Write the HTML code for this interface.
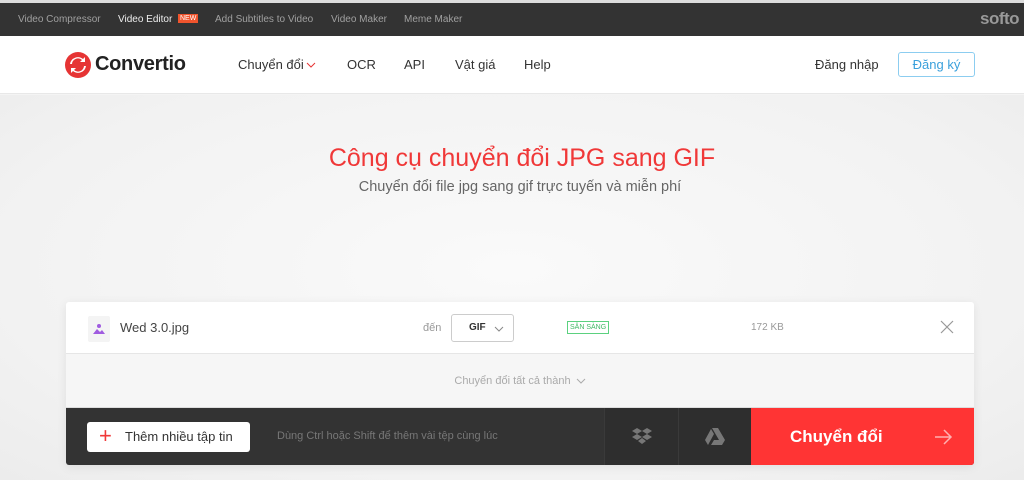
<!DOCTYPE html>
<html><head><meta charset="utf-8"><style>
*{margin:0;padding:0;box-sizing:border-box}
body{width:1024px;height:480px;overflow:hidden;font-family:"Liberation Sans","Noto Sans CJK SC",sans-serif;background:#f4f4f4;position:relative}
.top{position:absolute;left:0;top:0;width:1024px;height:36px;background:#333;border-top:3px solid #ddd;font-size:10px;color:#a0a0a0}
.top span{position:absolute;top:11px}
.hdr{position:absolute;top:36px;left:0;width:1024px;height:58px;background:#fff;border-bottom:1px solid #e8e8e8;font-size:13px;color:#333}
.hdr span{position:absolute;top:21px}
.main{position:absolute;top:95px;left:0;width:1024px;height:385px;background:radial-gradient(ellipse at 50% 45%,#fafafa 0%,#f2f2f2 70%,#ececec 100%)}
.abs{position:absolute}
</style></head><body>
<div class="top">
<span style="left:18px">Video Compressor</span>
<span style="left:118px;color:#eee">Video Editor</span>
<span style="left:178px;top:11px;background:#f0542d;color:#fff;font-size:7px;padding:1px 2px">NEW</span>
<span style="left:215px">Add Subtitles to Video</span>
<span style="left:331px">Video Maker</span>
<span style="left:404px">Meme Maker</span>
<span style="left:980px;top:6px;font-size:17px;font-weight:bold;color:#999;letter-spacing:-0.5px">softo</span>
</div>
<div class="hdr">
<svg class="abs" style="left:65px;top:16px" width="26" height="26" viewBox="0 0 26 26"><circle cx="13" cy="13" r="13" fill="#e63434"/><path d="M7 12a6 6 0 0 1 10-4l-2 2h5V5l-2 2A8 8 0 0 0 5 12z M19 14a6 6 0 0 1-10 4l2-2H6v5l2-2a8 8 0 0 0 13-5z" fill="#fff"/></svg>
<span style="left:95px;top:17px;font-size:20px;font-weight:bold;color:#222;letter-spacing:-0.3px">Convertio</span>
<span style="left:238px">Chuyển đổi</span>
<svg class="abs" style="left:306px;top:26px" width="10" height="6"><path d="M1 1l4 4 4-4" stroke="#e63434" fill="none"/></svg>
<span style="left:347px">OCR</span>
<span style="left:404px">API</span>
<span style="left:455px">Vật giá</span>
<span style="left:524px">Help</span>
<span style="left:815px">Đăng nhập</span>
<div class="abs" style="left:898px;top:16px;width:77px;height:25px;border:1px solid #8ccdf0;border-radius:3px;color:#3aa0dc;text-align:center;line-height:23px">Đăng ký</div>
</div>
<div class="main">
<div class="abs" style="top:49px;left:10px;width:1024px;text-align:center;font-size:25px;color:#f03838">Công cụ chuyển đổi JPG sang GIF</div>
<div class="abs" style="top:84px;left:8px;width:1024px;text-align:center;font-size:14.5px;color:#666">Chuyển đổi file jpg sang gif trực tuyến và miễn phí</div>
</div>
<div class="abs" style="left:66px;top:302px;width:908px;height:163px;box-shadow:0 2px 10px rgba(0,0,0,.08);border-radius:3px;overflow:hidden">
<div class="abs" style="left:0;top:0;width:908px;height:52px;background:#fff;border-bottom:1px solid #e6e6e6">
<div class="abs" style="left:22px;top:14px;width:22px;height:26px;background:#f4f4f4;border-radius:2px"><svg width="22" height="26"><circle cx="11" cy="10" r="2" fill="#a05ce0"/><path d="M5 18l4-5 3 3 2-2 3 4z" fill="#a05ce0"/></svg></div>
<div class="abs" style="left:54px;top:18px;font-size:13px;color:#444">Wed 3.0.jpg</div>
<div class="abs" style="left:357px;top:20px;font-size:11px;color:#999">đến</div>
<div class="abs" style="left:385px;top:12px;width:63px;height:28px;border:1px solid #ccc;border-radius:3px;font-size:10px;font-weight:bold;color:#333;line-height:26px;padding-left:17px">GIF<svg style="position:absolute;left:42px;top:11px" width="10" height="6"><path d="M1 1l4 4 4-4" stroke="#888" fill="none"/></svg></div>
<div class="abs" style="left:501px;top:19px;border:1px solid #5bd17f;color:#40b865;font-size:7px;padding:2px 2px">SẴN SÀNG</div>
<div class="abs" style="left:685px;top:20px;font-size:10px;color:#999">172 KB</div>
<svg class="abs" style="left:874px;top:18px" width="14" height="14"><path d="M1 1l12 12M13 1L1 13" stroke="#999" stroke-width="1.2"/></svg>
</div>
<div class="abs" style="left:0;top:52px;width:908px;height:54px;background:#f6f6f6;border-bottom:1px solid #ddd;text-align:center;line-height:54px;font-size:11px;color:#aaa">Chuyển đổi tất cả thành <svg width="10" height="6" style="margin-left:2px"><path d="M1 1l4 4 4-4" stroke="#aaa" fill="none"/></svg></div>
<div class="abs" style="left:0;top:106px;width:908px;height:57px;background:#333">
<div class="abs" style="left:21px;top:14px;width:163px;height:30px;background:#fff;border-radius:3px;font-size:13px;color:#333;line-height:30px;padding-left:38px"><span style="position:absolute;left:12px;color:#f03838;font-size:22px;top:-1px">+</span>Thêm nhiều tập tin</div>
<div class="abs" style="left:211px;top:22px;font-size:11px;color:#777">Dùng Ctrl hoặc Shift để thêm vài tệp cùng lúc</div>
<div class="abs" style="left:538px;top:0;width:74px;height:57px;background:#2e2e2e;border-left:1px solid #3a3a3a"><svg style="position:absolute;left:27px;top:20px" width="20" height="17"><path d="M5 0l5 3-5 3-5-3zM15 0l5 3-5 3-5-3zM5 6l5 3-5 3-5-3zM15 6l5 3-5 3-5-3zM10 10l4 3-4 3-4-3z" fill="#777"/></svg></div>
<div class="abs" style="left:612px;top:0;width:73px;height:57px;background:#2e2e2e;border-left:1px solid #3a3a3a"><svg style="position:absolute;left:26px;top:20px" width="20" height="17"><path d="M7 0h6l7 12h-6zM6 1l3 5-6 11-3-5zM6 17l3-5h11l-3 5z" fill="#777"/></svg></div>
<div class="abs" style="left:685px;top:0;width:223px;height:57px;background:#ff3434;color:#fff;font-size:17px;font-weight:bold;line-height:57px;padding-left:39px">Chuyển đổi<svg style="position:absolute;left:184px;top:21px" width="18" height="16"><path d="M0 8h16M9 1l7 7-7 7" stroke="#ffb0b0" stroke-width="1.5" fill="none"/></svg></div>
</div>
</div>
</body></html>
